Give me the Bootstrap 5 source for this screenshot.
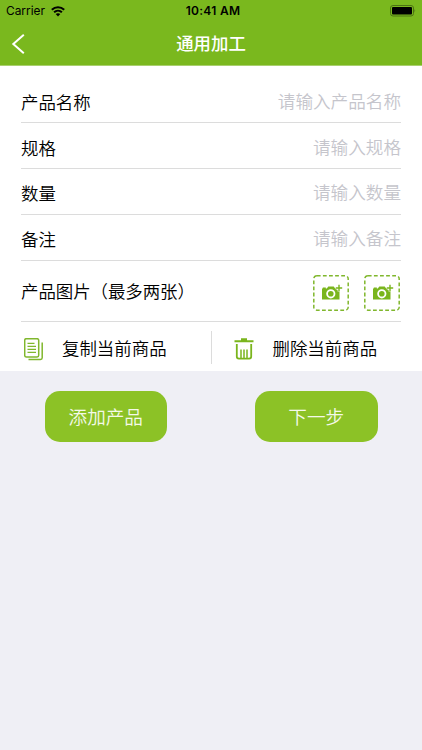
<!DOCTYPE html>
<html lang="zh-CN">
<head>
<meta charset="utf-8">
<meta name="viewport" content="width=device-width, initial-scale=1">
<title>通用加工</title>
<link href="https://cdn.jsdelivr.net/npm/bootstrap@5.3.0/dist/css/bootstrap.min.css" rel="stylesheet">
<style>
body{background:#efeff5;color:#000;font-family:Inter,"Noto Sans CJK SC",sans-serif;font-size:17.45px;font-weight:350;line-height:24px;min-height:750px;overflow:hidden}
svg{display:block;flex:none}
.app-head{background:#7ab81e;height:66px;border-bottom:1px solid #a9cf6e}
.status{height:22px;font-size:11.9px;font-weight:400;line-height:22px;padding-left:6px;padding-right:6px}
.wifi{margin-left:6px}
.clock{font-size:12px;letter-spacing:.3px;margin-left:4px}
.side{flex:1 1 0}
.title-bar{height:43px;padding:0 11px}
.title-bar h1{font-size:17.4px;line-height:24px;font-weight:500;margin:0;color:#fff}
.form-panel{height:305px;padding:11.5px 21px 0;background:#fff}
.field{height:45.8px;border-bottom:1px solid #dcdcdc;padding-top:6px}
.field input{border:0;outline:0;padding:0;background:none;text-align:right;min-width:0;font-size:17.6px;line-height:24px;height:26px;margin-top:-3px}
.field input::placeholder{color:#c5c5cc;opacity:1;font-weight:350}
.photos{height:61px;border-bottom:1px solid #dcdcdc;padding-top:2px}
.photo-label{letter-spacing:-.05px}
.photo-group{gap:15px;margin-right:1px;padding-top:2px}
.photo-btn{border:0;padding:0;background:none}
.tool{border:0;background:none;padding:0;color:#000;font-weight:350;height:49px;padding-top:6px}
.tool-text{margin-left:19px}
.copy{margin-left:3px}
.trash{margin-left:22px}
.split{width:1px;height:33px;background:#dcdcdc;margin-top:9px}
.cta{width:122.5px;height:51px;border:0;border-radius:15px;background:#8cc226;color:#f4f9e8;font-size:18.6px;font-weight:350;padding:0}
.cta-row{padding:20px 44.5px 0}
</style>
<script src="https://cdn.jsdelivr.net/npm/bootstrap@5.3.0/dist/js/bootstrap.bundle.min.js"></script>
</head>
<body>
<svg width="0" height="0" class="position-absolute" aria-hidden="true">
<symbol id="camera" viewBox="0 0 36 36">
<rect x=".8" y=".8" width="34.4" height="34.4" rx="3" fill="none" stroke="#80b72d" stroke-width="1.5" stroke-dasharray="3.8 2.3"/>
<path fill="#7ab51d" d="M9 13.4h.8v-1h3v1h1l1.5-1.8h5.4l1.5 1.8h2.1v1.7h2.2v9.4H9z"/>
<circle cx="17.8" cy="18.8" r="3.7" fill="none" stroke="#fff" stroke-width="1.8"/>
<path stroke="#fff" stroke-width="2.8" d="M26 9.5v7M22.8 13.1h6"/>
<path stroke="#7ab51d" stroke-width="1.4" d="M26 9.8v6.4M22.8 13h6.4"/>
</symbol>
</svg>
<header class="app-head">
<div class="status d-flex align-items-center">
<div class="side d-flex align-items-center"><span>Carrier</span>
<svg class="wifi" width="14" height="11" viewBox="0 0 14 11" fill="none" stroke="#000" stroke-width="2"><path d="M.8 3.8c3.5-3.3 8.9-3.3 12.4 0M3.1 6.3c2.2-2.1 5.6-2.1 7.8 0"/><path fill="#000" stroke="none" d="M4.7 8.1c1.3-1.2 3.3-1.2 4.6 0L7 10.5z"/></svg></div>
<strong class="clock fw-semibold">10:41 AM</strong>
<div class="side d-flex justify-content-end"><svg width="26" height="12" viewBox="0 0 26 12"><rect x=".5" y=".5" width="23" height="10.5" rx="2.5" fill="none" stroke="#4c7313"/><rect x="2" y="2" width="20" height="7.5" rx="1" fill="#000"/><path d="M24.5 4v3.6q1.5-1.8 0-3.6" fill="#4c7313"/></svg></div>
</div>
<div class="title-bar d-flex align-items-center">
<div class="side"><svg width="14" height="20" viewBox="0 0 14 20" fill="none" stroke="#fff" stroke-width="2"><path d="M12.8 .8 2.3 10l10.5 9.2"/></svg></div>
<h1>通用加工</h1><div class="side"></div>
</div>
</header>
<main>
<section class="form-panel">
<label class="field d-flex align-items-center"><span>产品名称</span><input class="flex-grow-1" placeholder="请输入产品名称"></label>
<label class="field d-flex align-items-center"><span>规格</span><input class="flex-grow-1" placeholder="请输入规格"></label>
<label class="field d-flex align-items-center"><span>数量</span><input class="flex-grow-1" placeholder="请输入数量"></label>
<label class="field d-flex align-items-center"><span>备注</span><input class="flex-grow-1" placeholder="请输入备注"></label>
<div class="photos d-flex align-items-center justify-content-between"><span class="photo-label">产品图片（最多两张）</span>
<div class="photo-group d-flex"><button class="photo-btn" aria-label="添加图片一"><svg width="36" height="36"><use href="#camera"/></svg></button><button class="photo-btn" aria-label="添加图片二"><svg width="36" height="36"><use href="#camera"/></svg></button></div></div>
<div class="d-flex">
<button class="tool d-flex align-items-center w-50"><svg class="copy" width="19" height="23" viewBox="0 0 19 23" fill="none" stroke="#80b72d" stroke-width="1.5"><rect x=".7" y=".7" width="14" height="18.2" rx="1.6"/><path stroke-width="1.3" d="M3.5 5.3h7M3.5 8.3h8.5M3.5 11.3h8.5M3.5 14.3h8.5"/><path d="M18.2 4.5v15.3q0 1.7-1.7 1.7H4.5"/></svg><span class="tool-text">复制当前商品</span></button>
<div class="split"></div>
<button class="tool d-flex align-items-center w-50"><svg class="trash" width="20" height="22" viewBox="0 0 20 22" fill="none" stroke="#7ab51d" stroke-width="1.8"><path stroke-width="2" d="M.5 3.3h19M7 1.3h6" /><path d="M2.8 6v12.6q0 2 2 2h10.4q2 0 2-2V6"/><path stroke-width="1.5" d="M7 11.5V20M10 11.5V20M13 11.5V20"/></svg><span class="tool-text">删除当前商品</span></button>
</div>
</section>
<div class="cta-row d-flex justify-content-between"><button class="cta">添加产品</button><button class="cta">下一步</button></div>
</main>
</body>
</html>
